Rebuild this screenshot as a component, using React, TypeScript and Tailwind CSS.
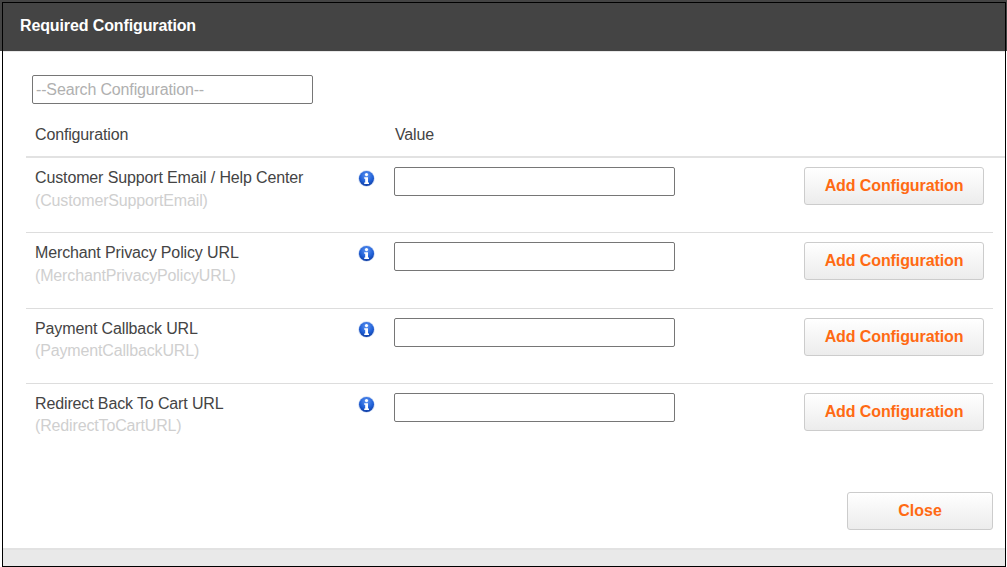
const ROWS = [
  { label: 'Customer Support Email / Help Center', name: '(CustomerSupportEmail)', h: 'h-[75px]', sub: 'mt-[3px]' },
  { label: 'Merchant Privacy Policy URL', name: '(MerchantPrivacyPolicyURL)', h: 'h-[76px]', sub: 'mt-[3px]' },
  { label: 'Payment Callback URL', name: '(PaymentCallbackURL)', h: 'h-[75px]', sub: 'mt-[2px]' },
  { label: 'Redirect Back To Cart URL', name: '(RedirectToCartURL)', h: 'h-[75px]', sub: 'mt-[2px]' },
];

function InfoIcon() {
  return (
    <svg width="17" height="17" viewBox="0 0 17 17" className="block">
      <defs>
        <radialGradient id="infoFill" cx="50%" cy="30%" r="75%">
          <stop offset="0%" stopColor="#5f95f2" />
          <stop offset="60%" stopColor="#1f5fd6" />
          <stop offset="100%" stopColor="#0c3596" />
        </radialGradient>
      </defs>
      <circle cx="8.5" cy="8.5" r="8.3" fill="#cddbf5" />
      <circle cx="8.5" cy="8.5" r="7.5" fill="url(#infoFill)" />
      <circle cx="8.5" cy="4.6" r="1.6" fill="#fff" />
      <path d="M6.2 7.2h3.8v5.2h1v1.6H6.2v-1.6h1V8.8h-1z" fill="#fff" />
    </svg>
  );
}

export default function App() {
  return (
    <div className="w-[1007px] h-[567px] pt-[2px] pl-[2px] bg-[linear-gradient(#444444_51px,#ffffff_51px)] overflow-hidden font-['Liberation_Sans',Arial,sans-serif]">
      <div className="w-[1004px] h-[565px] border border-black bg-white flex flex-col">
        <div className="h-[49px] bg-[#444444] pl-[17px] pb-[3px] flex items-center shrink-0 border-b border-[#e8e8e8]">
          <span className="text-white font-bold text-[16px] tracking-[-0.12px]">Required Configuration</span>
        </div>
        <div className="flex-1 flex flex-col">
          <div className="pl-[29px] pt-[23px]">
            <input
              readOnly
              placeholder="--Search Configuration--"
              className="block w-[281px] h-[29px] border border-[#767676] rounded-[2px] px-[3px] text-[16px] tracking-[-0.15px] outline-none placeholder:text-[#b0b0b0]"
            />
          </div>
          <div className="ml-[23px] h-[54px] border-b-2 border-[#e2e2e2] flex items-center pt-[10px] text-[16px] tracking-[-0.15px] text-[#444444]">
            <span className="pl-[9px] w-[369px]">Configuration</span>
            <span>Value</span>
          </div>
          {ROWS.map((row, i) => (
            <div
              key={row.name}
              className={`ml-[23px] mr-[12px] ${row.h} flex items-start pt-[9px] ${i < 3 ? 'border-b border-[#dddddd]' : ''}`}
            >
              <div className="w-[323px] pl-[9px] pt-px">
                <div className="text-[16px] leading-[20px] tracking-[-0.13px] text-[#444444]">{row.label}</div>
                <div className={`text-[16px] leading-[20px] ${row.sub} tracking-[-0.15px] text-[#cfcfcf]`}>{row.name}</div>
              </div>
              <div className="w-[45px] pl-[9px] pt-[3px]">
                <InfoIcon />
              </div>
              <input
                readOnly
                className="block w-[281px] h-[29px] border border-[#767676] rounded-[2px] outline-none"
              />
              <button className="ml-[129px] w-[180px] h-[38px] border border-[#cccccc] rounded-[3px] bg-gradient-to-b from-white to-[#ececec] text-[#ff6a13] font-bold text-[16px] tracking-[-0.1px] leading-none">
                Add Configuration
              </button>
            </div>
          ))}
          <div className="flex justify-end pr-[12px] pt-[33px]">
            <button className="w-[146px] h-[38px] border border-[#cccccc] rounded-[3px] bg-gradient-to-b from-white to-[#ececec] text-[#ff6a13] font-bold text-[16px] leading-none">
              Close
            </button>
          </div>
          <div className="mt-[18px] flex-1 border-t-2 border-[#e2e2e2] bg-[#e9e9e9]" />
        </div>
      </div>
    </div>
  );
}
